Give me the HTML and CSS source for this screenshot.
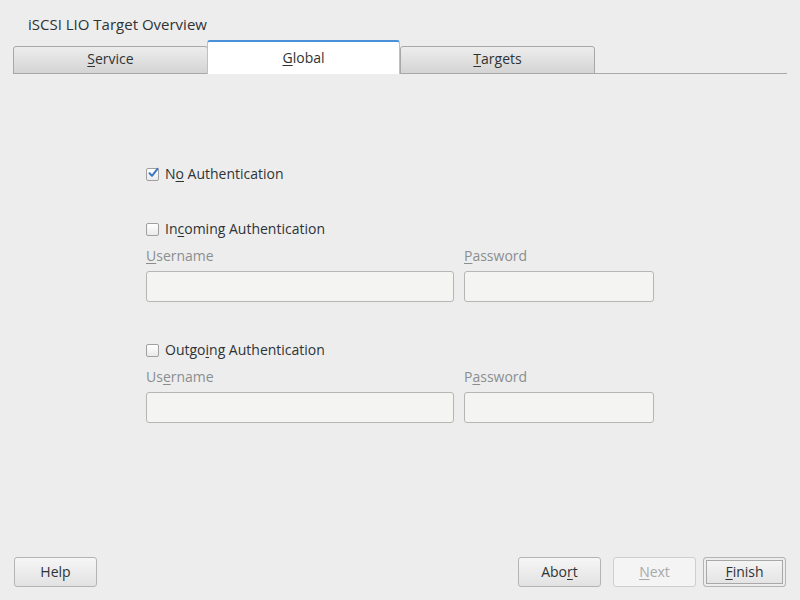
FILE: index.html
```html
<!DOCTYPE html>
<html>
<head>
<meta charset="utf-8">
<link rel="stylesheet" href="styles.css">
</head>
<body>
<div class="window">
  <div class="title">iSCSI LIO Target Overview</div>
  <div class="tabs">
    <div class="tab"><span><u>S</u>ervice</span></div>
    <div class="tab active"><span><u>G</u>lobal</span></div>
    <div class="tab"><span><u>T</u>argets</span></div>
  </div>
  <div class="content">
    <div class="form">
      <label class="check first"><span class="box checked"><svg width="12" height="12" viewBox="0 0 12 12"><path d="M2.5 6.2 L5 8.8 L10.5 1.8" fill="none" stroke="#3d78c4" stroke-width="2" stroke-linecap="round" stroke-linejoin="round"/></svg></span><span>N<u>o</u> Authentication</span></label>

      <label class="check section"><span class="box"></span><span>In<u>c</u>oming Authentication</span></label>
      <div class="fields">
        <div class="field user"><div class="flabel"><u>U</u>sername</div><div class="input"></div></div>
        <div class="field pass"><div class="flabel"><u>P</u>assword</div><div class="input"></div></div>
      </div>

      <label class="check section2"><span class="box"></span><span>Outgo<u>i</u>ng Authentication</span></label>
      <div class="fields">
        <div class="field user"><div class="flabel">Us<u>e</u>rname</div><div class="input"></div></div>
        <div class="field pass"><div class="flabel">P<u>a</u>ssword</div><div class="input"></div></div>
      </div>
    </div>
  </div>
  <div class="footer">
    <button class="btn">Help</button>
    <div class="spacer"></div>
    <button class="btn">Abo<u>r</u>t</button>
    <button class="btn disabled"><u>N</u>ext</button>
    <button class="btn default"><u>F</u>inish</button>
  </div>
</div>
</body>
</html>
```

FILE: styles.css
```css
html, body {
  margin: 0;
  padding: 0;
  background: #ededed;
}
body {
  font-family: "Open Sans", "DejaVu Sans", sans-serif;
  font-size: 14px;
  color: #2e3436;
}
u {
  text-decoration: underline;
  text-underline-offset: 2px;
}
.window {
  width: 800px;
  height: 600px;
  display: flex;
  flex-direction: column;
}
.title {
  padding: 14px 0 0 28px;
  height: 26px;
  line-height: 20px;
  font-size: 15px;
}
.tabs {
  display: flex;
  align-items: flex-end;
  margin: 0 13px 0 13px;
  height: 33px;
  border-bottom: 1px solid #a8a8a8;
}
.tab {
  box-sizing: border-box;
  width: 195px;
  height: 28px;
  margin-bottom: -1px;
  border: 1px solid #a8a8a8;
  border-radius: 3px 3px 0 0;
  background: linear-gradient(#ededed, #d4d4d4);
  display: flex;
  align-items: center;
  justify-content: center;
  line-height: 20px;
  padding-bottom: 2px;
}
.tab.active {
  width: 193px;
  height: 34px;
  margin-left: -1px;
  margin-right: 0;
  background: #ffffff;
  border: 1px solid #c0c0c0;
  border-top: 2px solid #4a90d9;
  border-bottom: none;
  padding-bottom: 0;
}
.content {
  flex: 1;
}
.form {
  margin-left: 146px;
  width: 508px;
  padding-top: 90px;
}
.check {
  display: flex;
  align-items: center;
  height: 20px;
  line-height: 20px;
}
.box {
  box-sizing: border-box;
  width: 13px;
  height: 13px;
  border: 1px solid #a0a0a0;
  border-radius: 2px;
  background: linear-gradient(#ffffff, #eaeaea);
  margin-right: 6px;
  position: relative;
}
.box svg {
  position: absolute;
  left: 0;
  top: -2px;
}
.section {
  margin-top: 35px;
}
.section2 {
  margin-top: 38px;
}
.fields {
  display: flex;
  gap: 10px;
  margin-top: 7px;
}
.field.user {
  width: 308px;
}
.field.pass {
  width: 190px;
}
.flabel {
  color: #8b8e8f;
  line-height: 20px;
  height: 20px;
  margin-bottom: 5px;
}
.input {
  box-sizing: border-box;
  height: 31px;
  border: 1px solid #b6b6b3;
  border-radius: 3px;
  background: #f4f4f2;
}
.footer {
  display: flex;
  align-items: center;
  padding: 0 14px 13px 14px;
  gap: 12px;
}
.spacer {
  flex: 1;
}
.btn {
  box-sizing: border-box;
  width: 83px;
  height: 30px;
  border: 1px solid #b4b4b4;
  border-radius: 3px;
  background: linear-gradient(#f6f6f6, #e2e2e2);
  font-family: inherit;
  font-size: 14px;
  color: #2e3436;
  padding: 0 0 1px 0;
}
.btn.disabled {
  background: #f4f4f4;
  border-color: #cfcfcf;
  color: #a8aaaa;
}
.btn.default {
  margin-left: -5px;
  box-shadow: inset 0 0 0 2px #ededed, inset 0 0 0 3px #a8a8a8;
}
```
